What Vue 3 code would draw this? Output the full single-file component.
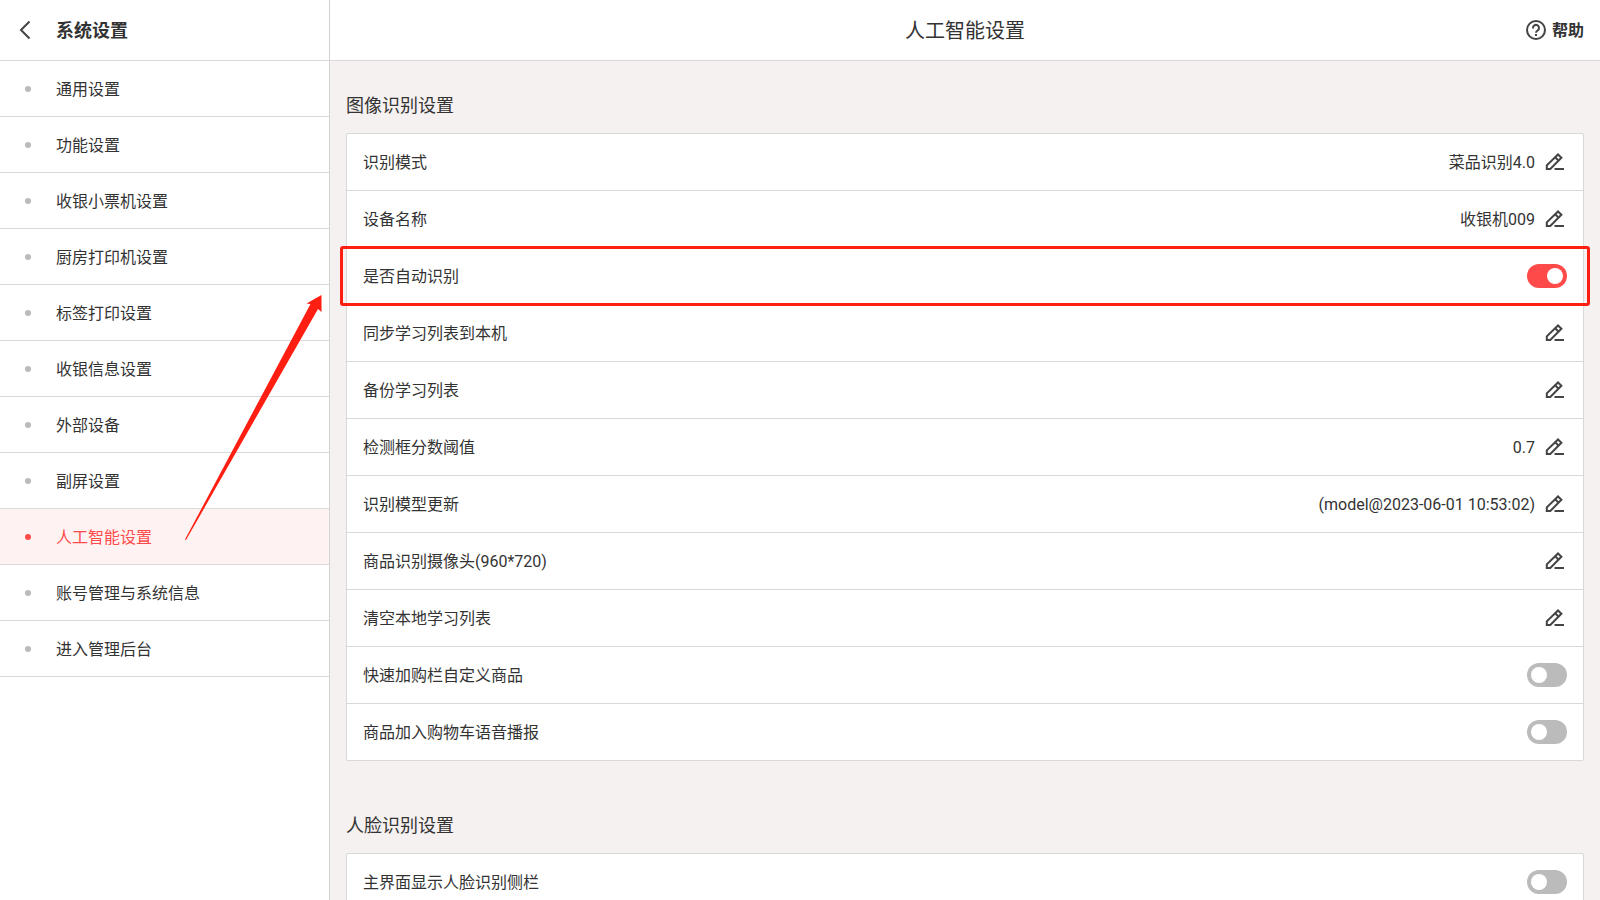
<script setup>
import { ref } from 'vue'

const menu = [
  '通用设置',
  '功能设置',
  '收银小票机设置',
  '厨房打印机设置',
  '标签打印设置',
  '收银信息设置',
  '外部设备',
  '副屏设置',
  '人工智能设置',
  '账号管理与系统信息',
  '进入管理后台',
]
const active = ref('人工智能设置')

const sections = ref([
  {
    title: '图像识别设置',
    rows: [
      { label: '识别模式', value: '菜品识别4.0' },
      { label: '设备名称', value: '收银机009' },
      { label: '是否自动识别', toggle: true, on: true, marked: true },
      { label: '同步学习列表到本机' },
      { label: '备份学习列表' },
      { label: '检测框分数阈值', value: '0.7' },
      { label: '识别模型更新', value: '(model@2023-06-01 10:53:02)' },
      { label: '商品识别摄像头(960*720)' },
      { label: '清空本地学习列表' },
      { label: '快速加购栏自定义商品', toggle: true, on: false },
      { label: '商品加入购物车语音播报', toggle: true, on: false },
    ],
  },
  {
    title: '人脸识别设置',
    rows: [{ label: '主界面显示人脸识别侧栏', toggle: true, on: false }],
  },
])
</script>

<template>
  <div class="app">
    <aside class="sidebar">
      <header class="bar side-bar">
        <button class="back" type="button" aria-label="返回">
          <svg width="12" height="20" viewBox="0 0 12 20" fill="none" stroke="#444" stroke-width="2">
            <path d="M10.500 1.500 2 10l8.500 8.500" />
          </svg>
        </button>
        <h2 class="side-title text">系统设置</h2>
      </header>
      <nav class="menu">
        <a
          v-for="item in menu"
          :key="item"
          href="#"
          class="menu-item"
          :class="{ active: item === active }"
          @click.prevent="active = item"
        ><span class="text">{{ item }}</span></a>
      </nav>
      <svg class="pointer" width="138" height="246" viewBox="0 0 138 246">
        <path d="M136.500 0 121.500 8.500 125.500 9 0 244.500 1 245 133 14 136.500 17Z" fill="#ff1f12" />
      </svg>
    </aside>

    <main class="main">
      <header class="bar main-bar">
        <h1 class="page-title text">人工智能设置</h1>
        <button class="help" type="button">
          <svg width="20" height="20" viewBox="0 0 20 20" fill="none" stroke="#444" stroke-width="2">
            <circle cx="10" cy="10" r="9" />
            <path d="M7 8.500V8a3 3 0 1 1 4.800 2.300C10.700 11.100 10 11.500 10 12.700" />
            <path d="M10 14v2" />
          </svg>
          <span class="text">帮助</span>
        </button>
      </header>
      <div class="content">
        <section v-for="(section, s) in sections" :key="section.title" class="section">
          <h3 class="section-title text">{{ section.title }}</h3>
          <div class="card">
            <div v-for="(row, r) in section.rows" :key="row.label" class="row" :class="{ marked: row.marked }">
              <label class="label text" :for="`row-${s}-${r}`">{{ row.label }}</label>
              <input v-if="row.toggle" :id="`row-${s}-${r}`" v-model="row.on" class="switch" type="checkbox" role="switch" />
              <template v-else>
                <span class="text">{{ row.value }}</span>
                <button :id="`row-${s}-${r}`" class="edit" type="button">
                  <svg width="24" height="24" viewBox="0 0 24 24" fill="none" stroke="#444" stroke-width="2">
                    <path d="M3.800 19v-3.600L15 4.500 18.400 7.800 7.300 19z" />
                    <path d="m12.200 7.300 3.400 3.400M11.500 19H21" />
                  </svg>
                </button>
              </template>
            </div>
          </div>
        </section>
      </div>
    </main>
  </div>
</template>

<style>
body {
  margin: 0;
  overflow: hidden;
}
</style>

<style scoped>
.app {
  display: flex;
  height: 100vh;
  overflow: hidden;
  background: #f5f1f0;
  color: #333;
  font: 16px/24px Roboto, "Noto Sans CJK SC", sans-serif;
}
h1, h2, h3 {
  margin: 0;
  font-weight: 400;
}
button {
  padding: 0;
  border: 0;
  background: none;
  color: inherit;
  font: inherit;
  cursor: pointer;
}
svg {
  display: block;
}
.text {
  padding-top: 2px;
}
.sidebar {
  position: relative;
  flex: none;
  width: 329px;
  border-right: 1px solid #d2d2d2;
  background: #fff;
}
.bar {
  display: flex;
  align-items: center;
  height: 60px;
  border-bottom: 1px solid #d9d9d9;
  background: #fff;
}
.back {
  display: flex;
  justify-content: center;
  width: 50px;
  margin-right: 6px;
}
.side-title {
  font-size: 18px;
  font-weight: 700;
}
.menu-item {
  display: flex;
  align-items: center;
  height: 55px;
  border-bottom: 1px solid #d9d9d9;
  color: inherit;
  text-decoration: none;
}
.menu-item::before {
  content: "";
  width: 6px;
  height: 6px;
  margin: 0 25px;
  border-radius: 50%;
  background: #bbb;
}
.menu-item.active {
  background: #fff2f2;
  color: #ff4a4a;
}
.menu-item.active::before {
  background: #ff4a4a;
}
.pointer {
  position: absolute;
  top: 295px;
  left: 185px;
  z-index: 2;
  pointer-events: none;
}
.main {
  display: flex;
  flex: 1;
  flex-direction: column;
  min-width: 0;
}
.main-bar {
  display: grid;
  flex: none;
  grid-template-columns: 1fr auto 1fr;
  padding: 0 16px;
}
.page-title {
  grid-column: 2;
  font-size: 20px;
}
.help {
  display: flex;
  align-items: center;
  gap: 6px;
  justify-self: end;
  font-weight: 700;
}
.content {
  flex: 1;
  min-height: 0;
  padding: 31px 16px;
  overflow: hidden;
}
.section {
  margin-bottom: 51px;
}
.section-title {
  margin-bottom: 15px;
  font-size: 18px;
}
.card {
  border: 1px solid #d9d9d9;
  border-radius: 2px;
  background: #fff;
}
.row {
  position: relative;
  display: flex;
  align-items: center;
  height: 56px;
  padding: 0 16px;
}
.row + .row {
  border-top: 1px solid #d9d9d9;
}
.label {
  flex: 1;
}
.edit {
  margin-left: 8px;
}
.switch {
  width: 40px;
  height: 24px;
  margin: 0;
  padding: 4px;
  border-radius: 12px;
  background: #bbb;
  appearance: none;
  cursor: pointer;
}
.switch::before {
  content: "";
  display: block;
  width: 16px;
  height: 16px;
  border-radius: 50%;
  background: #fff;
}
.switch:checked {
  background: #ff4a4a;
}
.switch:checked::before {
  margin-left: auto;
}
.marked::after {
  content: "";
  position: absolute;
  inset: -2px -7px;
  z-index: 1;
  border: 3px solid #ff1f12;
  border-radius: 3px;
  pointer-events: none;
}
</style>
